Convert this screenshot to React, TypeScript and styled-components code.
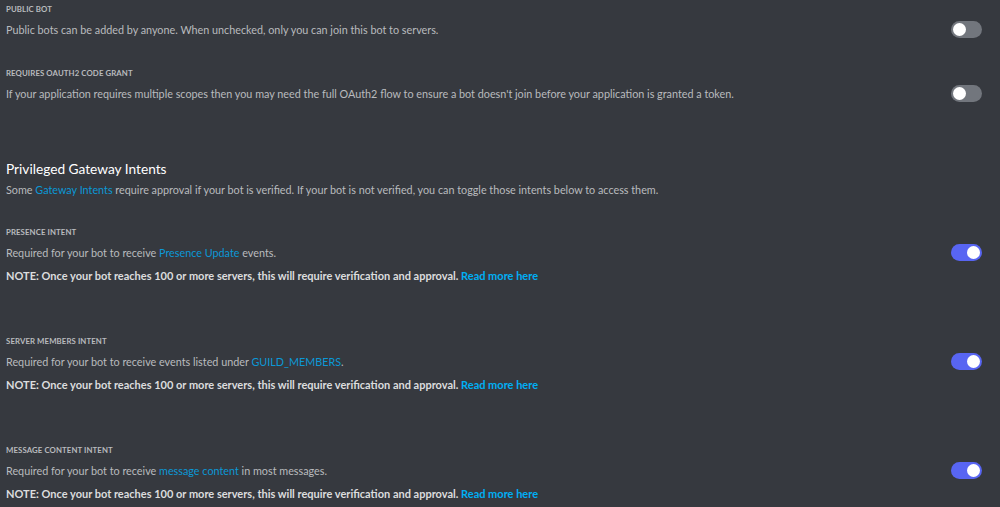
import React from "react";
import styled, { createGlobalStyle } from "styled-components";

const GlobalStyle = createGlobalStyle`
  html, body {
    margin: 0;
    padding: 0;
    background: #36393f;
  }
  body {
    font-family: Lato, "Noto Sans", sans-serif;
  }
`;

interface Intent {
  label: string;
  before: string;
  link: string;
  after: string;
}

const intents: Intent[] = [
  {
    label: "Presence Intent",
    before: "Required for your bot to receive ",
    link: "Presence Update",
    after: " events.",
  },
  {
    label: "Server Members Intent",
    before: "Required for your bot to receive events listed under ",
    link: "GUILD_MEMBERS",
    after: ".",
  },
  {
    label: "Message Content Intent",
    before: "Required for your bot to receive ",
    link: "message content",
    after: " in most messages.",
  },
];

const App: React.FC = () => {
  return (
    <Page>
      <GlobalStyle />
      <Setting>
        <Label>Public Bot</Label>
        <Row>
          <Description>
            Public bots can be added by anyone. When unchecked, only you can
            join this bot to servers.
          </Description>
          <Toggle on={false} />
        </Row>
      </Setting>
      <Setting>
        <Label>Requires OAuth2 Code Grant</Label>
        <Row>
          <Description>
            If your application requires multiple scopes then you may need the
            full OAuth2 flow to ensure a bot doesn't join before your
            application is granted a token.
          </Description>
          <Toggle on={false} />
        </Row>
      </Setting>

      <Section>
        <Heading>Privileged Gateway Intents</Heading>
        <Subtext>
          Some <InlineLink>Gateway Intents</InlineLink> require approval if your
          bot is verified. If your bot is not verified, you can toggle those
          intents below to access them.
        </Subtext>
      </Section>

      {intents.map((intent) => (
        <IntentBlock key={intent.label}>
          <Label>{intent.label}</Label>
          <Row>
            <Description>
              {intent.before}
              <InlineLink>{intent.link}</InlineLink>
              {intent.after}
            </Description>
            <Toggle on={true} />
          </Row>
          <Note>
            NOTE: Once your bot reaches 100 or more servers, this will require
            verification and approval. <NoteLink>Read more here</NoteLink>
          </Note>
        </IntentBlock>
      ))}
    </Page>
  );
};

const Toggle: React.FC<{ on: boolean }> = ({ on }) => (
  <Track on={+on}>
    <Knob on={+on} />
  </Track>
);

export default App;

const Page = styled.div`
  width: 1000px;
  height: 507px;
  overflow: hidden;
  box-sizing: border-box;
  padding: 1px 18px 0 6px;
  display: flex;
  flex-direction: column;
`;

const Setting = styled.div`
  margin-bottom: 24px;
  &:nth-of-type(2) {
    margin-bottom: 54px;
  }
`;

const Label = styled.div`
  height: 16px;
  line-height: 16px;
  font-size: 7.8px;
  font-weight: 700;
  text-transform: uppercase;
  color: #b9bbbe;
  letter-spacing: 0.1px;
`;

const Row = styled.div`
  display: flex;
  align-items: center;
  justify-content: space-between;
  height: 24px;
`;

const Description = styled.div`
  font-size: 10.8px;
  color: #b9bbbe;
  white-space: nowrap;
`;

const InlineLink = styled.span`
  color: #0b98d6;
`;

const Section = styled.div`
  margin-bottom: 26px;
`;

const Heading = styled.div`
  height: 20px;
  line-height: 20px;
  font-size: 13.7px;
  color: #ffffff;
`;

const Subtext = styled.div`
  margin-top: 3px;
  height: 16px;
  line-height: 16px;
  font-size: 10.8px;
  color: #b9bbbe;
  white-space: nowrap;
`;

const IntentBlock = styled.div`
  margin-bottom: 45px;
`;

const Note = styled.div`
  height: 24px;
  line-height: 24px;
  font-size: 11px;
  font-weight: 700;
  color: #dcddde;
  white-space: nowrap;
`;

const NoteLink = styled.span`
  color: #00aff4;
`;

const Track = styled.div<{ on: number }>`
  position: relative;
  width: 31px;
  height: 17px;
  border-radius: 9px;
  background: ${(p) => (p.on ? "#5865f2" : "#72767d")};
  flex-shrink: 0;
`;

const Knob = styled.div<{ on: number }>`
  position: absolute;
  top: 2px;
  left: ${(p) => (p.on ? "16px" : "2px")};
  width: 13px;
  height: 13px;
  border-radius: 50%;
  background: #ffffff;
`;
